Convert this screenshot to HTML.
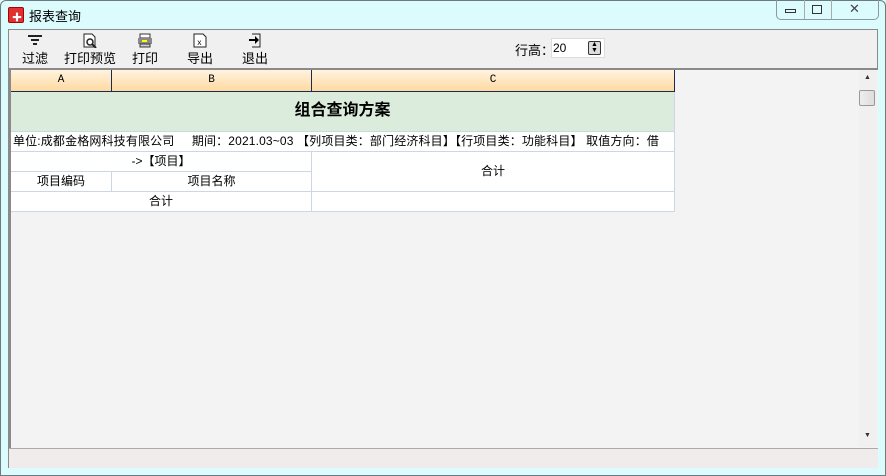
<!DOCTYPE html>
<html><head><meta charset="utf-8"><style>
*{margin:0;padding:0;box-sizing:border-box}
body{width:886px;height:476px;overflow:hidden;background:#dbfbfd;font-family:"Liberation Sans","Noto Sans CJK SC",sans-serif;font-size:12px;color:#000;position:relative}
.win{position:absolute;left:0;top:0;width:886px;height:476px;box-shadow:inset 0 0 0 1px #6b7b80;border-radius:6px 6px 0 0;background:#dbfbfd}
.abs{position:absolute}
.title{left:29px;top:6px;font-size:13px}
.icon{left:8px;top:7px;width:16px;height:16px;background:#e03030;border:1px solid #a00;border-radius:2px}
.btns{left:776px;top:0;width:103px;height:20px;border:1px solid #8a9a9e;border-top:none;border-radius:0 0 5px 5px}
.client{left:8px;top:29px;width:870px;height:439px;background:#f0f0f0;border:1px solid #8a8a8a}
.tb{font-size:13px;text-align:center}
.grid{left:9px;top:68px;width:869px;height:380px;background:#f3f3f3;border-top:2px solid #8a8a8a;border-left:2px solid #8a8a8a}
.status{left:9px;top:448px;width:869px;height:20px;background:#efeceb;border-top:1px solid #aaa}
.c{position:absolute;border-right:1px solid #cdd6e4;border-bottom:1px solid #cdd6e4;background:#fff;text-align:center;font-size:12px;line-height:19px}
.h{background:linear-gradient(#fff3e0,#ffd9a0);border-right:1px solid #1a2a50;border-bottom:1px solid #1a2a50;font-family:"Liberation Mono",monospace;font-size:11px}
.sb{left:859px;top:70px;width:18px;height:377px;background:#f0f0f0}
</style></head><body><div class="win">
<div class="abs icon"><div style="position:absolute;left:3px;top:1px;color:#fff;font-size:10px">✚</div></div>
<div class="abs title">报表查询</div>
<div class="abs btns"><div style="position:absolute;left:27px;top:0;height:19px;border-left:1px solid #aaa"></div><div style="position:absolute;left:54px;top:0;height:19px;border-left:1px solid #aaa"></div>
<div style="position:absolute;left:8px;top:9px;width:11px;height:4px;border:1px solid #333"></div>
<div style="position:absolute;left:35px;top:5px;width:10px;height:9px;border:1px solid #333"></div>
<div style="position:absolute;left:72px;top:1px;font-size:13px;color:#444">✕</div></div>
<div class="abs client"></div>
<div class="abs tb" style="left:20px;top:33px;width:30px"><svg width="16" height="14"><path d="M1 3h14M4 7h8M6 11h4" stroke="#222" stroke-width="2"/></svg><div style="margin-top:-2px">过滤</div></div>
<div class="abs tb" style="left:64px;top:33px;width:52px"><svg width="16" height="15"><path d="M2 1h8l3 3v10H2z" fill="#fff" stroke="#222"/><circle cx="8" cy="9" r="3" fill="none" stroke="#222" stroke-width="1.5"/><path d="M10 11l4 4" stroke="#222" stroke-width="2"/></svg><div style="margin-top:-3px">打印预览</div></div>
<div class="abs tb" style="left:130px;top:33px;width:30px"><svg width="16" height="15"><rect x="3" y="1" width="10" height="4" fill="#fff" stroke="#333"/><rect x="1" y="5" width="14" height="6" fill="#888"/><rect x="5" y="7" width="5" height="2" fill="#ff0"/><rect x="3" y="11" width="10" height="3" fill="#ccc" stroke="#333"/></svg><div style="margin-top:-3px">打印</div></div>
<div class="abs tb" style="left:185px;top:33px;width:30px"><svg width="16" height="15"><path d="M2 1h9l3 3v10H2z" fill="#fff" stroke="#222"/><text x="5" y="12" font-size="8" font-family="Liberation Mono">x</text></svg><div style="margin-top:-3px">导出</div></div>
<div class="abs tb" style="left:240px;top:33px;width:30px"><svg width="16" height="15"><path d="M5 1h8v13H5" fill="none" stroke="#222"/><path d="M2 6h6V3l4 4-4 4V8H2z" fill="#000"/></svg><div style="margin-top:-3px">退出</div></div>
<div class="abs" style="left:515px;top:40px;font-size:13px">行高：</div>
<div class="abs" style="left:551px;top:38px;width:54px;height:20px;background:#fff;border:1px solid #ddd;font-size:12px;padding:2px 1px">20<div style="position:absolute;left:36px;top:2px;width:13px;height:14px;border:1px solid #333;border-radius:2px;background:#ddd;font-size:7px;line-height:6px;text-align:center">▲<br>▼</div></div>
<div class="abs grid"></div>
<div class="c h" style="left:11px;top:70px;width:101px;height:22px;line-height:21px">A</div>
<div class="c h" style="left:112px;top:70px;width:200px;height:22px;line-height:21px">B</div>
<div class="c h" style="left:312px;top:70px;width:363px;height:22px;line-height:21px">C</div>
<div class="c" style="left:11px;top:92px;width:664px;height:40px;background:#dcecdc;font-size:16px;font-weight:bold;line-height:38px">组合查询方案</div>
<div class="c" style="left:11px;top:132px;width:664px;height:20px;text-align:left;padding-left:2px;white-space:nowrap;font-size:12px;letter-spacing:0.15px">单位:成都金格网科技有限公司&nbsp;&nbsp;&nbsp;&nbsp;&nbsp;期间：2021.03~03 【列项目类：部门经济科目】【行项目类：功能科目】 取值方向：借</div>
<div class="c" style="left:11px;top:152px;width:301px;height:20px">-&gt;【项目】</div>
<div class="c" style="left:312px;top:152px;width:363px;height:40px;line-height:39px">合计</div>
<div class="c" style="left:11px;top:172px;width:101px;height:20px">项目编码</div>
<div class="c" style="left:112px;top:172px;width:200px;height:20px">项目名称</div>
<div class="c" style="left:11px;top:192px;width:301px;height:20px">合计</div>
<div class="c" style="left:312px;top:192px;width:363px;height:20px"></div>
<div class="abs sb"><div style="position:absolute;left:5px;top:4px;font-size:7px;color:#333">▲</div><div style="position:absolute;left:0;top:20px;width:16px;height:16px;border:1px solid #999;border-radius:2px;background:linear-gradient(90deg,#eee,#ddd)"></div><div style="position:absolute;left:5px;top:362px;font-size:7px;color:#333">▼</div></div>
<div class="abs status"></div>
</div></body></html>
